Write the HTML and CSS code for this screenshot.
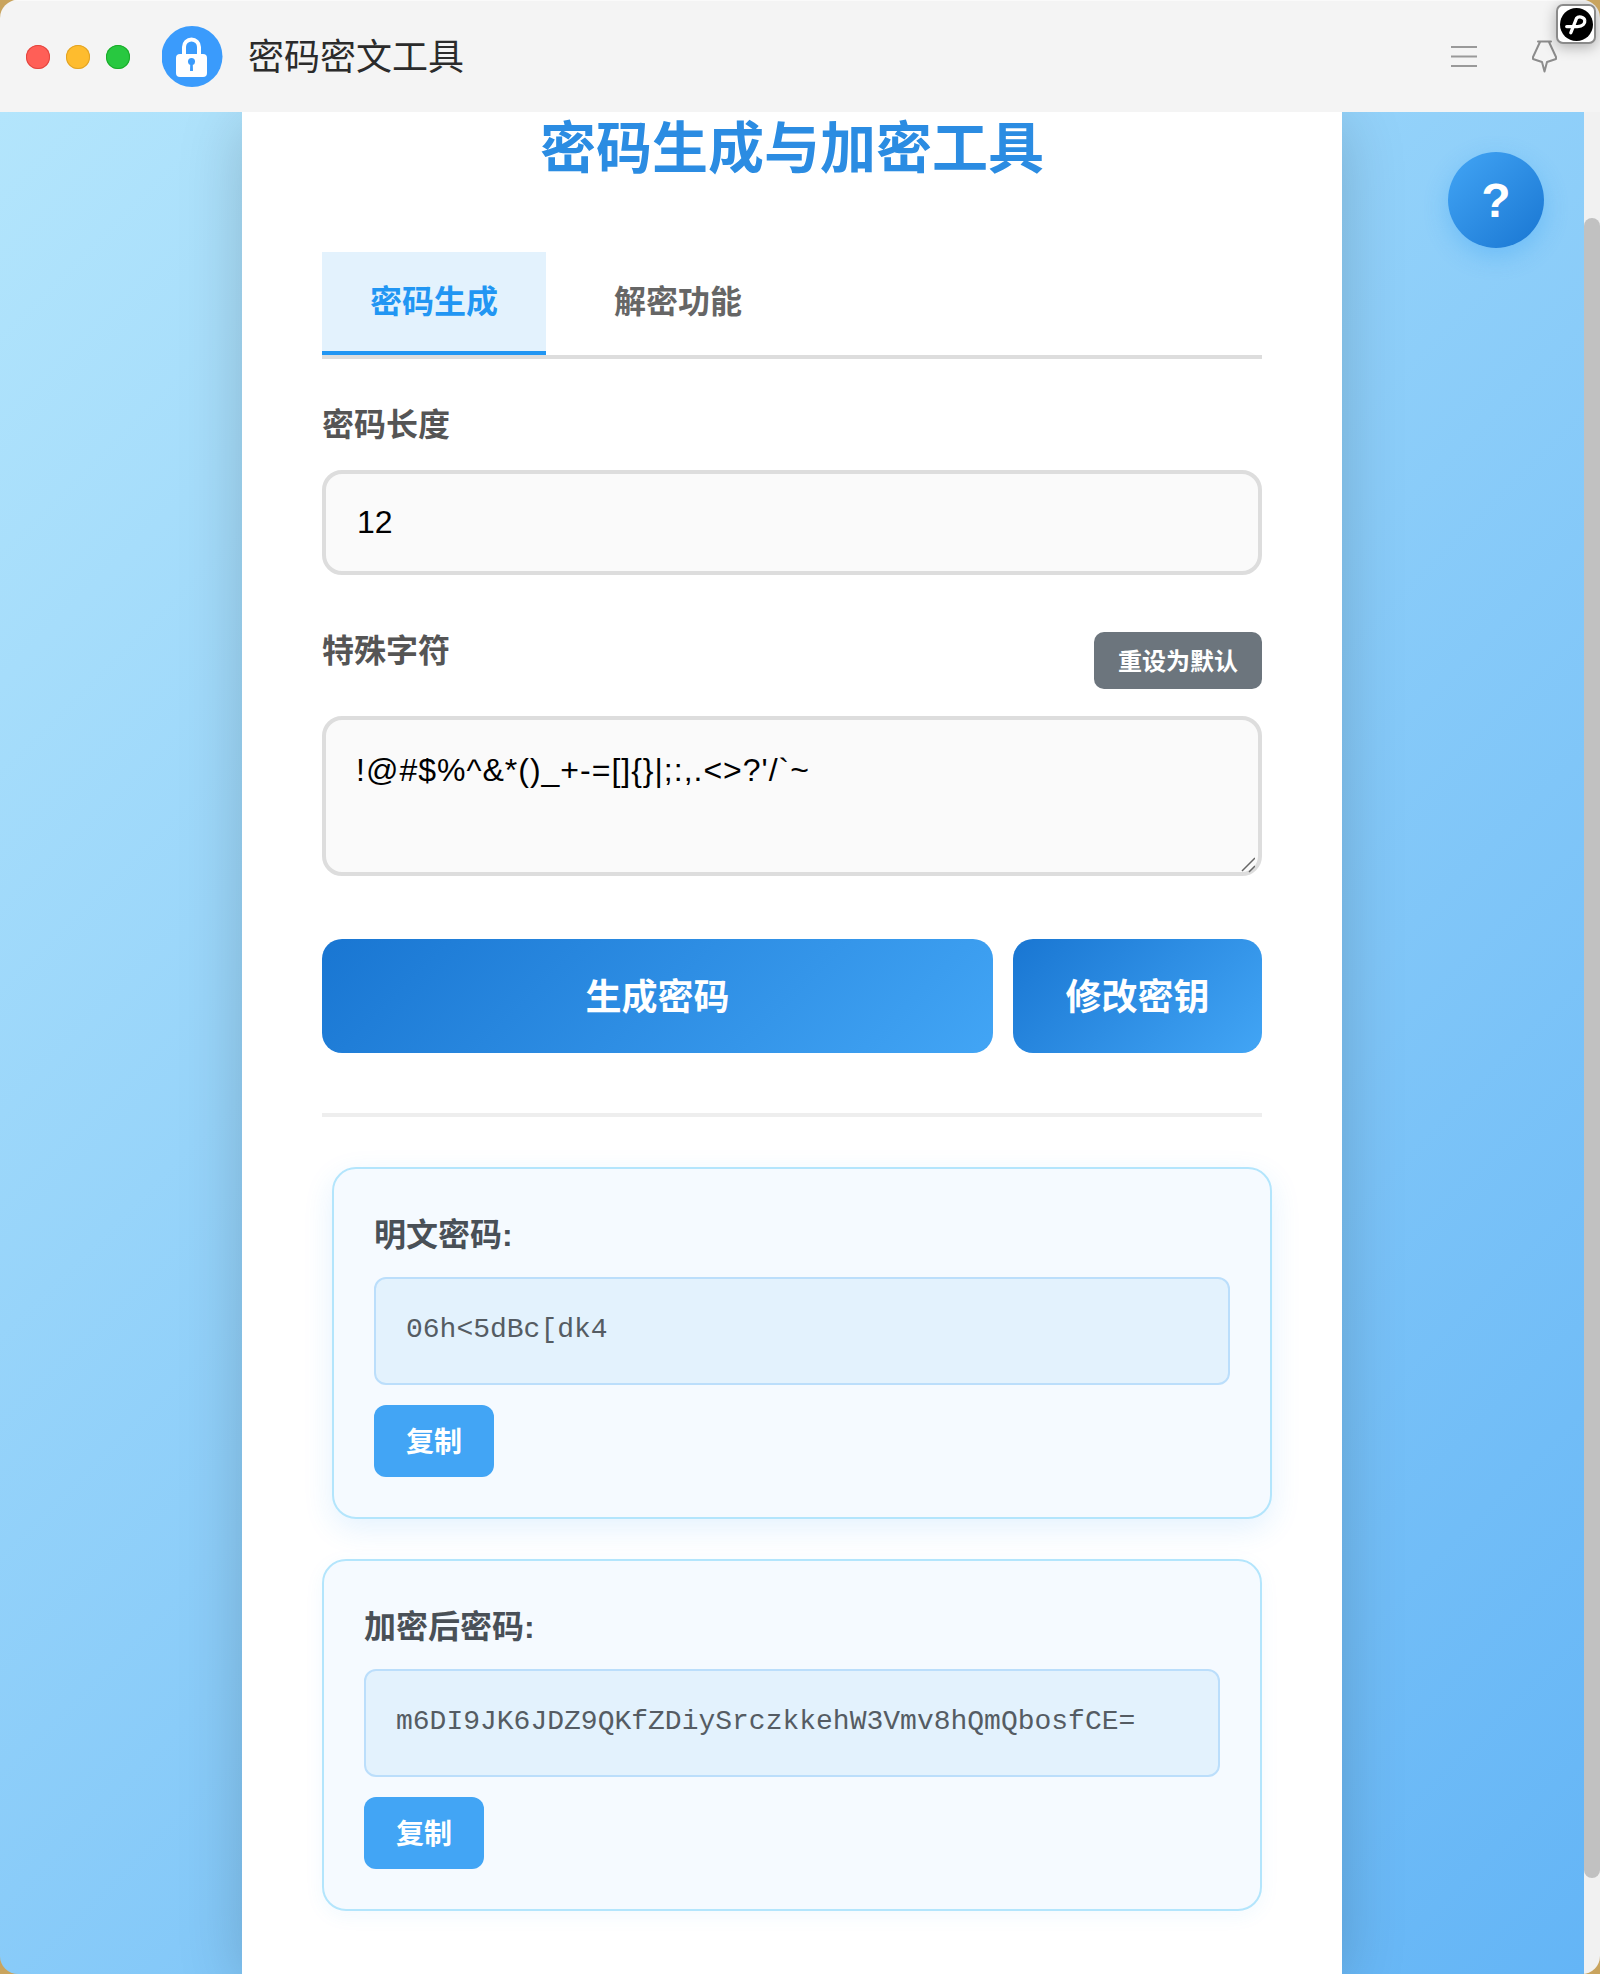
FILE: index.html
```html
<!DOCTYPE html>
<html lang="zh-CN">
<head>
<meta charset="utf-8">
<title>密码密文工具</title>
<link rel="stylesheet" href="styles.css">
</head>
<body>
<div class="window">
  <header class="titlebar">
    <div class="lights">
      <span class="light light-red"></span>
      <span class="light light-yellow"></span>
      <span class="light light-green"></span>
    </div>
    <svg class="logo" viewBox="0 0 61 61" aria-hidden="true">
      <circle cx="30" cy="30.500" r="30.500" fill="#3a9bfc"/>
      <path d="M22 30V21a7.500 7.500 0 0 1 15 0V30" fill="none" stroke="#fff" stroke-width="4"/>
      <rect x="14" y="28" width="31" height="23" rx="4" fill="#fff"/>
      <circle cx="29.500" cy="35.500" r="3.500" fill="#3a9bfc"/>
      <path d="M28.300 36H30.700L31 45H28Z" fill="#3a9bfc"/>
    </svg>
    <div class="app-name">密码密文工具</div>
    <svg class="menu-icon" viewBox="0 0 26 21" aria-hidden="true">
      <path d="M0 1H26M0 10.500H26M0 20H26" stroke="#999" stroke-width="2" fill="none"/>
    </svg>
    <svg class="pin-icon" viewBox="0 0 25 33" aria-hidden="true">
      <path d="M6 1.500H19M8 2L1 17V19L10 22L12.500 31.500L15 22L24 19V17L17 2" fill="none" stroke="#8c8c8c" stroke-width="2" stroke-linejoin="round" stroke-linecap="round"/>
    </svg>
  </header>

  <div class="body-area">
    <div class="stage">
      <main class="panel">
        <h1 class="page-title">密码生成与加密工具</h1>
        <nav class="tabs">
          <div class="tab tab-active">密码生成</div>
          <div class="tab">解密功能</div>
        </nav>

        <label class="field-label">密码长度</label>
        <input class="text-input" type="text" value="12">

        <div class="label-row">
          <label class="field-label field-label-row">特殊字符</label>
          <button class="reset-btn">重设为默认</button>
        </div>
        <div class="area-wrap">
          <textarea class="text-area">!@#$%^&amp;*()_+-=[]{}|;:,.&lt;&gt;?'/`~</textarea>
          <svg class="resize-grip" viewBox="0 0 14 16" aria-hidden="true">
            <path d="M1 14L14 1M8 15L14 9" stroke="#666" stroke-width="1.500" fill="none"/>
          </svg>
        </div>

        <div class="actions">
          <button class="action-btn action-main">生成密码</button>
          <button class="action-btn action-side">修改密钥</button>
        </div>

        <hr class="divider">

        <section class="result result-hover">
          <div class="result-label">明文密码:</div>
          <div class="result-box">06h&lt;5dBc[dk4</div>
          <button class="copy-btn">复制</button>
        </section>

        <section class="result">
          <div class="result-label">加密后密码:</div>
          <div class="result-box">m6DI9JK6JDZ9QKfZDiySrczkkehW3Vmv8hQmQbosfCE=</div>
          <button class="copy-btn">复制</button>
        </section>
      </main>
      <button class="help-btn">?</button>
    </div>
    <div class="scrollbar"><div class="scroll-thumb"></div></div>
  </div>

  <div class="float-badge">
    <svg viewBox="0 0 32 32" aria-hidden="true">
      <circle cx="16" cy="16" r="16" fill="#000"/>
      <path d="M6.500 18H17C22 18 24.500 15 24 12C23.500 8.500 18 7.500 16 10L10.500 24" fill="none" stroke="#fff" stroke-width="3.200" stroke-linecap="round"/>
    </svg>
  </div>
</div>
</body>
</html>
```
FILE: styles.css
```css
* { box-sizing: border-box; }
html, body { margin: 0; padding: 0; }
body {
  width: 1600px;
  height: 1974px;
  background: #c9a45e;
  font-family: "Liberation Sans", "Noto Sans CJK SC", sans-serif;
  overflow: hidden;
}
.window {
  position: relative;
  width: 1600px;
  height: 1974px;
  border-radius: 18px;
  overflow: hidden;
  display: flex;
  flex-direction: column;
}
.titlebar {
  height: 112px;
  flex: none;
  background: #f4f4f4;
  border-top: 1px solid #fafafa;
  display: flex;
  align-items: center;
  padding-left: 26px;
}
.lights { display: flex; gap: 16px; }
.light { width: 24px; height: 24px; border-radius: 50%; }
.light-red { background: #ff5f57; box-shadow: inset 0 0 0 1px #e2463f; }
.light-yellow { background: #febc2e; box-shadow: inset 0 0 0 1px #e1a325; }
.light-green { background: #28c840; box-shadow: inset 0 0 0 1px #1aab29; }
.logo { width: 61px; height: 61px; margin-left: 32px; flex: none; }
.app-name {
  margin-left: 25px;
  padding-top: 2px;
  font-size: 36px;
  color: #2b2b2b;
  line-height: 52px;
  flex: 1;
}
.menu-icon { width: 26px; height: 21px; flex: none; margin-right: 55px; }
.pin-icon { width: 25px; height: 33px; flex: none; margin-right: 43px; }

.body-area { flex: 1; display: flex; min-height: 0; }
.stage {
  position: relative;
  flex: 1;
  background: linear-gradient(135deg, #b3e5fc 0%, #64b5f6 100%);
  display: flex;
  justify-content: center;
  overflow: hidden;
}
.panel {
  width: 1100px;
  height: 100%;
  background: #fff;
  padding: 0 80px;
  box-shadow: 0 10px 60px rgba(0, 0, 0, 0.18);
}
.page-title {
  margin: 0 0 67px;
  font-size: 56px;
  line-height: 73px;
  font-weight: 700;
  text-align: center;
  color: #2b8ce2;
}
.tabs {
  display: flex;
  gap: 20px;
  height: 107px;
  border-bottom: 4px solid #ddd;
  margin-bottom: 44px;
}
.tab {
  height: 103px;
  padding: 0 48px;
  font-size: 32px;
  font-weight: 700;
  line-height: 101px;
  color: #666;
}
.tab-active {
  background: #e3f2fd;
  color: #2196f3;
  border-bottom: 4px solid #2196f3;
}
.field-label {
  display: block;
  font-size: 32px;
  font-weight: 700;
  line-height: 45px;
  color: #555;
  margin-bottom: 22px;
}
.field-label-row { line-height: 38px; margin-bottom: 19px; }
.text-input, .text-area {
  display: block;
  width: 100%;
  border: 4px solid #ddd;
  border-radius: 20px;
  background: #fafafa;
  color: #000;
  font-family: "Liberation Sans", "Noto Sans CJK SC", sans-serif;
  font-size: 32px;
  padding: 30px;
  outline: none;
}
.text-input { height: 105px; margin-bottom: 57px; padding-left: 31px; }
.text-area {
  height: 160px;
  padding-top: 32px;
  resize: none;
  letter-spacing: 1px;
}
.area-wrap { position: relative; margin-bottom: 63px; }
.resize-grip {
  position: absolute;
  right: 7px;
  bottom: 3px;
  width: 14px;
  height: 16px;
}
.label-row {
  display: flex;
  justify-content: space-between;
  align-items: flex-start;
  height: 57px;
  margin-bottom: 27px;
}
.reset-btn {
  width: 168px;
  height: 57px;
  border: 0;
  border-radius: 10px;
  padding: 0 0 2px;
  background: #6c757d;
  color: #fff;
  font-family: inherit;
  font-size: 24px;
  font-weight: 700;
}
.actions { display: flex; gap: 20px; margin-bottom: 60px; }
.action-btn {
  height: 114px;
  border: 0;
  border-radius: 20px;
  background: linear-gradient(135deg, #1976d2 0%, #42a5f5 100%);
  color: #fff;
  font-family: inherit;
  font-size: 36px;
  font-weight: 700;
  padding: 0 0 4px;
}
.action-main { flex: 1; }
.action-side { width: 249px; }
.divider {
  height: 4px;
  margin: 0 0 50px;
  border: 0;
  background: #eeeeee;
}
.result {
  height: 352px;
  padding: 40px;
  border: 2px solid #b3e5fc;
  border-radius: 24px;
  background: #f5faff;
  margin-bottom: 40px;
}
.result-hover {
  margin-left: 10px;
  margin-right: -10px;
  box-shadow: 0 10px 30px rgba(33, 150, 243, 0.12);
}
.result:not(.result-hover) { box-shadow: 0 5px 20px rgba(33, 150, 243, 0.06); }
.result-label {
  font-size: 32px;
  font-weight: 700;
  line-height: 52px;
  color: #495057;
  margin-bottom: 16px;
}
.result-box {
  height: 108px;
  border: 2px solid #bbdefb;
  border-radius: 12px;
  background: #e3f2fd;
  padding: 30px;
  font-family: "Liberation Mono", monospace;
  font-size: 28px;
  line-height: 42px;
  color: #555c63;
  margin-bottom: 20px;
}
.copy-btn {
  display: block;
  width: 120px;
  height: 72px;
  border: 0;
  border-radius: 12px;
  padding: 0 0 2px;
  background: #42a5f5;
  color: #fff;
  font-family: inherit;
  font-size: 28px;
  font-weight: 700;
}
.help-btn {
  position: absolute;
  top: 40px;
  right: 40px;
  width: 96px;
  height: 96px;
  border: 0;
  border-radius: 50%;
  padding: 0;
  background: linear-gradient(135deg, #42a5f5 0%, #1976d2 100%);
  color: #fff;
  font-family: "Liberation Sans", sans-serif;
  font-size: 48px;
  font-weight: 700;
  box-shadow: 0 8px 24px rgba(33, 150, 243, 0.3);
}
.scrollbar {
  width: 16px;
  flex: none;
  background: #f1f1f1;
  padding-top: 106px;
}
.scroll-thumb {
  height: 1660px;
  background: #c1c1c1;
  border-radius: 8px;
}
.float-badge {
  position: absolute;
  top: 4px;
  left: 1556px;
  width: 40px;
  height: 40px;
  background: #fff;
  border: 2px solid #8a8a8a;
  border-radius: 7px;
  box-shadow: 0 3px 14px rgba(0, 0, 0, 0.3);
  display: flex;
  align-items: center;
  justify-content: center;
}
.float-badge svg { width: 33px; height: 33px; }
```
